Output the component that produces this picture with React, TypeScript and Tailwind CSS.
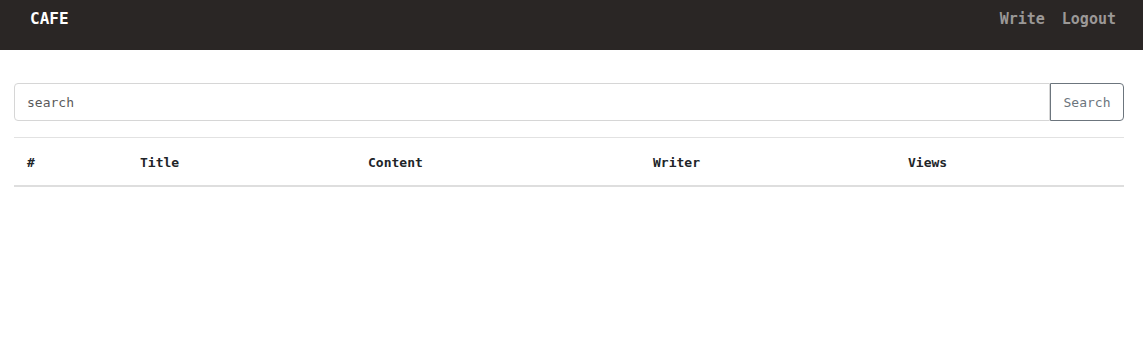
export default function App() {
  const columns = [
    { label: '#', width: 'w-[113px]' },
    { label: 'Title', width: 'w-[228px]' },
    { label: 'Content', width: 'w-[285px]' },
    { label: 'Writer', width: 'w-[255px]' },
    { label: 'Views', width: '' },
  ];

  return (
    <div className="min-h-[360px] bg-white font-['DejaVu_Sans_Mono',monospace]">
      {/* navbar */}
      <nav className="h-[50px] bg-[#2a2625] flex items-start justify-between pl-[30px] pr-[27px] pt-[9px]">
        <span className="text-white font-bold text-[16px] leading-[20px]">CAFE</span>
        <div className="flex gap-[17px] text-[15px] leading-[20px] font-bold text-[#9b9897]">
          <a>Write</a>
          <a>Logout</a>
        </div>
      </nav>

      <div className="pl-[14px] pr-[19px] pt-[33px]">
        {/* search */}
        <div className="flex h-[38px]">
          <input
            placeholder="search"
            className="flex-1 border border-[#d6d6d6] rounded-l-[4px] px-[12px] pt-[2px] text-[13px] text-[#333] placeholder:text-[#5a5a5a] outline-none"
          />
          <button className="w-[74px] border border-[#6c757d] rounded-r-[4px] pt-[2px] text-[13px] text-[#6c757d] bg-white">
            Search
          </button>
        </div>

        {/* table */}
        <table className="w-full mt-[16px] border-collapse text-[13px] text-[#212529]">
          <thead>
            <tr className="border-t border-[#e2e2e2] border-b-2 border-b-[#dedede]">
              {columns.map(c => (
                <th key={c.label} className={`${c.width} text-left font-bold h-[48px] px-[13px] pt-[3px]`}>
                  {c.label}
                </th>
              ))}
            </tr>
          </thead>
          <tbody />
        </table>
      </div>
    </div>
  );
}
